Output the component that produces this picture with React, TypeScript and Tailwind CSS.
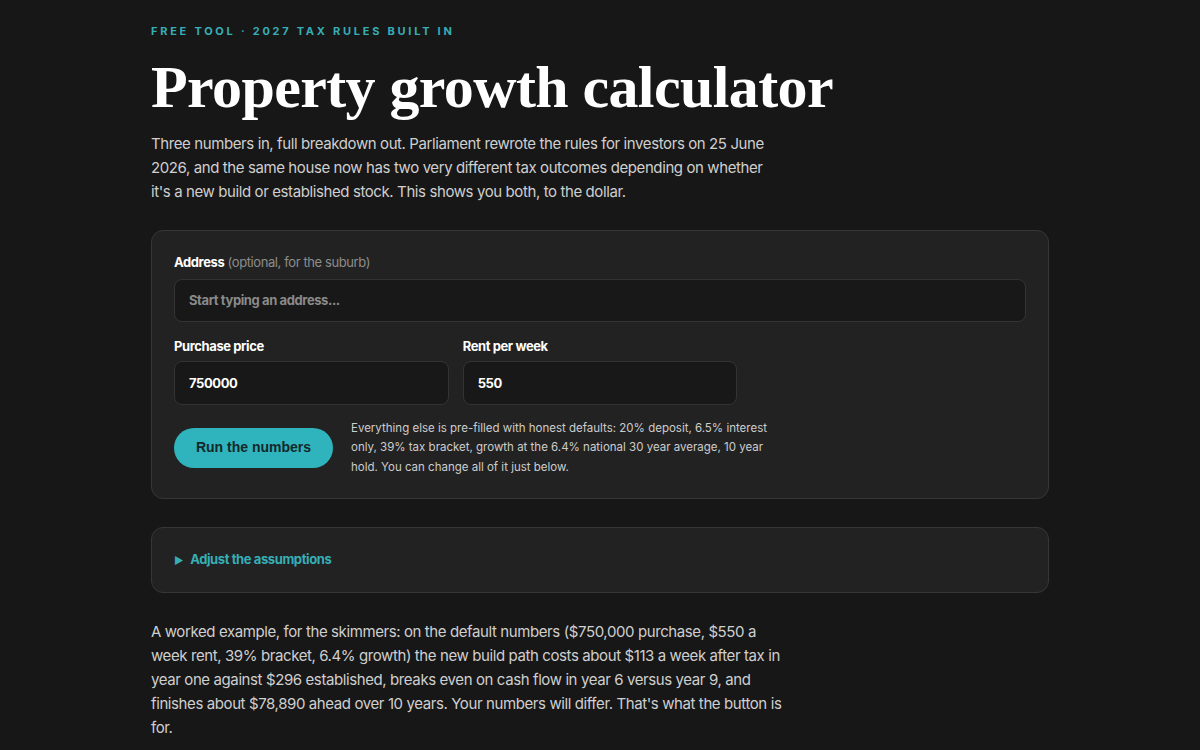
import React, { useState } from "react";

const sans = "font-['Inter',sans-serif]";

export default function App() {
  const [price, setPrice] = useState("750000");
  const [rent, setRent] = useState("550");
  const [address, setAddress] = useState("");
  const [open, setOpen] = useState(false);

  return (
    <div className={`min-h-screen bg-[#171717] text-[#d4d4d4] tracking-[-0.025em] ${sans}`}>
      <main className="max-w-[898px] mx-auto pt-[23px] pb-16">
        {/* Eyebrow + title */}
        <p className="text-[11px] font-bold tracking-[0.25em] text-[#37aeb6] uppercase">
          Free tool · 2027 tax rules built in
        </p>
        <h1 className="mt-[16px] font-['Liberation_Serif',serif] font-bold text-[60px] leading-[62px] text-white tracking-[-0.01em]">
          Property growth calculator
        </h1>
        <p className="mt-[14px] max-w-[632px] text-[15px] leading-[24px] text-[#cfcfcf]">
          Three numbers in, full breakdown out. Parliament rewrote the rules for investors on 25 June
          2026, and the same house now has two very different tax outcomes depending on whether
          it's a new build or established stock. This shows you both, to the dollar.
        </p>

        {/* Main inputs */}
        <section className="mt-[26px] rounded-xl border border-[#363636] bg-[#222222] px-[22px] pt-[22px] pb-[21px]">
          <label className="block text-[13px] leading-[18px]">
            <span className="font-bold text-white">Address</span>{" "}
            <span className="text-[#8d8d8d]">(optional, for the suburb)</span>
          </label>
          <input
            value={address}
            onChange={(e) => setAddress(e.target.value)}
            placeholder="Start typing an address..."
            className="mt-[8px] w-full h-[43px] rounded-lg border border-[#333333] bg-[#181818] px-[14px] text-[13px] font-bold text-white placeholder:text-[#8a8a8a] focus:outline-none"
          />

          <div className="mt-[15px] grid grid-cols-3 gap-x-[14px]">
            <div>
              <label className="block text-[13px] leading-[18px] font-bold text-white">Purchase price</label>
              <input
                value={price}
                onChange={(e) => setPrice(e.target.value)}
                className="mt-[6px] w-full h-[44px] rounded-lg border border-[#333333] bg-[#181818] px-[14px] text-[13px] font-bold text-white focus:outline-none"
              />
            </div>
            <div>
              <label className="block text-[13px] leading-[18px] font-bold text-white">Rent per week</label>
              <input
                value={rent}
                onChange={(e) => setRent(e.target.value)}
                className="mt-[6px] w-full h-[44px] rounded-lg border border-[#333333] bg-[#181818] px-[14px] text-[13px] font-bold text-white focus:outline-none"
              />
            </div>
          </div>

          <div className="mt-[14px] flex items-center gap-[18px]">
            <button className="shrink-0 w-[159px] h-[40px] rounded-full bg-[#2fb3bc] font-['Liberation_Sans',sans-serif] font-bold text-[14px] tracking-normal text-[#13282b] hover:bg-[#36c1ca]">
              Run the numbers
            </button>
            <p className="max-w-[418px] text-[11.5px] leading-[19.5px] tracking-normal text-[#cdcdcd]">
              Everything else is pre-filled with honest defaults: 20% deposit, 6.5% interest
              only, 39% tax bracket, growth at the 6.4% national 30 year average, 10 year
              hold. You can change all of it just below.
            </p>
          </div>
        </section>

        {/* Assumptions disclosure */}
        <section className="mt-[28px] rounded-xl border border-[#363636] bg-[#222222] px-[22px]">
          <button
            onClick={() => setOpen(!open)}
            className="h-[64px] flex items-center gap-[7px] text-[13px] font-bold text-[#37aeb6]"
          >
            <span className="text-[10px]">{open ? "▼" : "▶"}</span>
            Adjust the assumptions
          </button>
        </section>

        <p className="mt-[27px] max-w-[640px] text-[15px] leading-[24px] text-[#cfcfcf]">
          A worked example, for the skimmers: on the default numbers ($750,000 purchase, $550 a
          week rent, 39% bracket, 6.4% growth) the new build path costs about $113 a week after tax in
          year one against $296 established, breaks even on cash flow in year 6 versus year 9, and
          finishes about $78,890 ahead over 10 years. Your numbers will differ. That's what the button is
          for.
        </p>
      </main>
    </div>
  );
}
